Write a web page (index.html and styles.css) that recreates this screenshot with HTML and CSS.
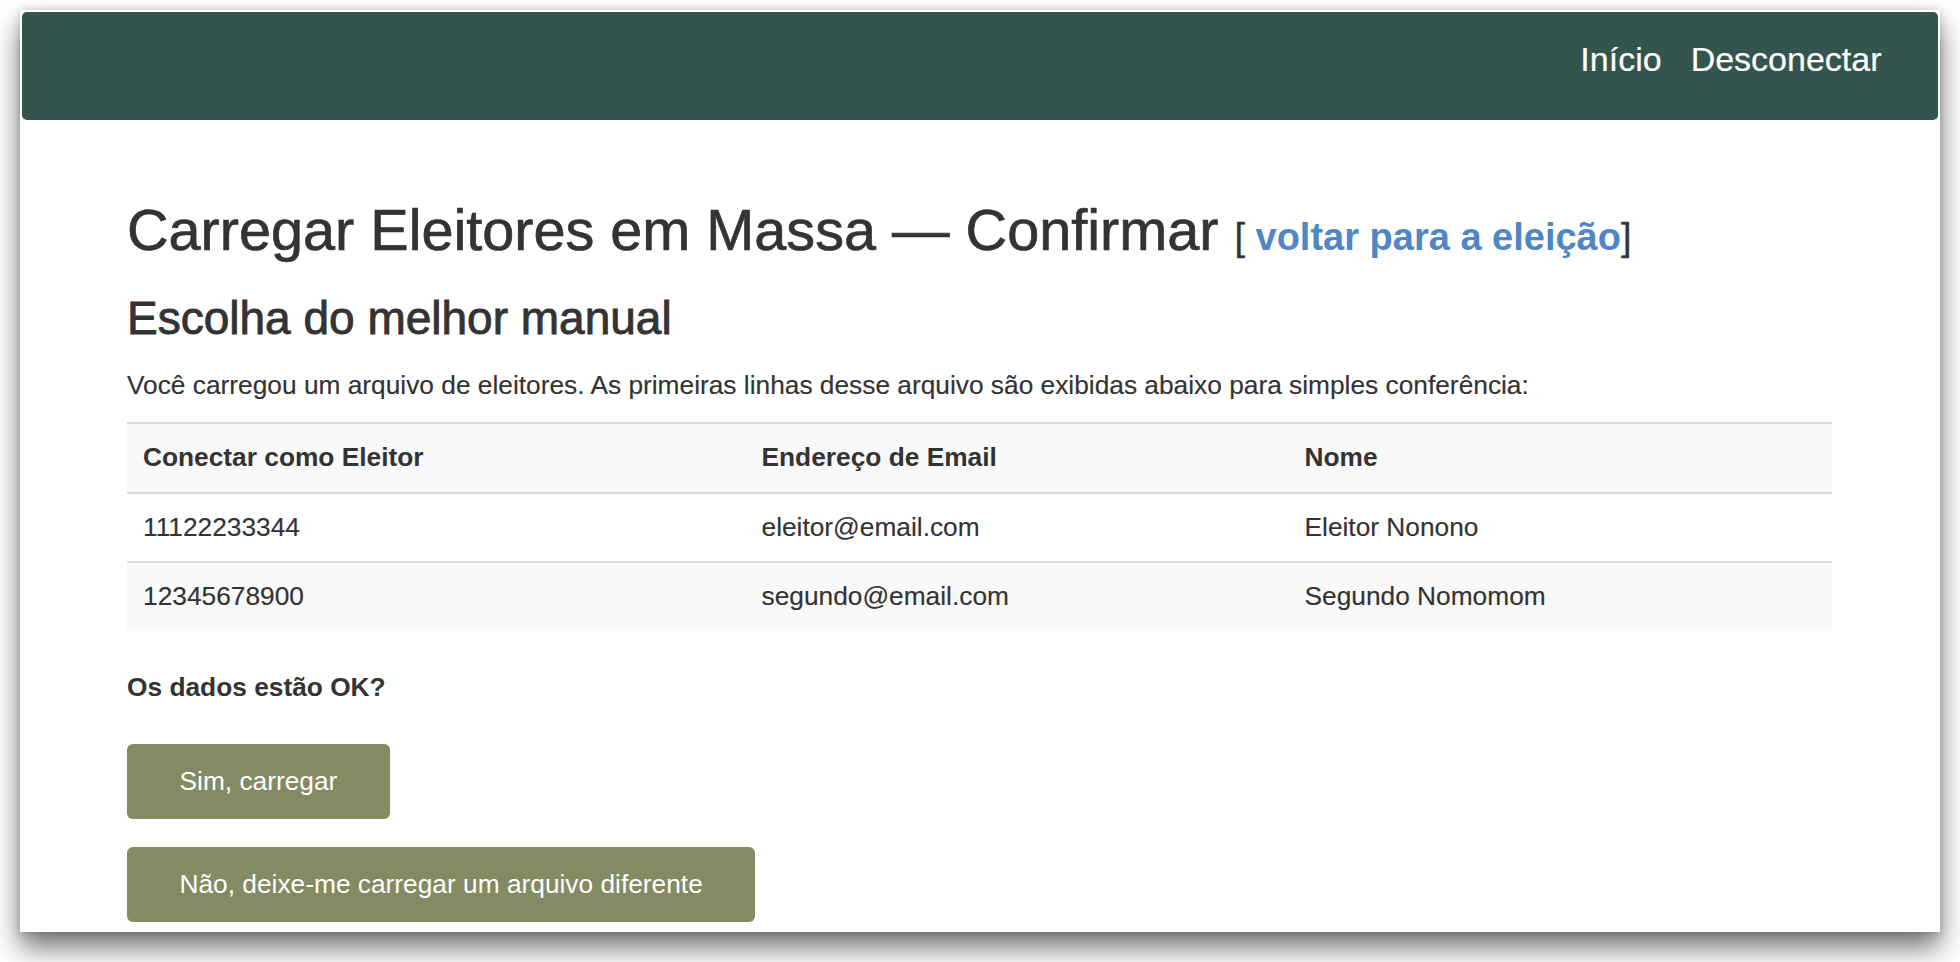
FILE: index.html
```html
<!DOCTYPE html>
<html lang="pt">
<head>
<meta charset="utf-8">
<title>Carregar Eleitores em Massa — Confirmar</title>
<link rel="stylesheet" href="styles.css">
</head>
<body>
<div class="window">
  <nav class="navbar">
    <a class="nav-link" href="#">Início</a>
    <a class="nav-link" href="#">Desconectar</a>
  </nav>
  <main class="content">
    <h1 class="title">Carregar Eleitores em Massa — Confirmar <span class="back">[ <a href="#">voltar para a eleição</a>]</span></h1>
    <h2 class="subtitle">Escolha do melhor manual</h2>
    <p class="intro">Você carregou um arquivo de eleitores. As primeiras linhas desse arquivo são exibidas abaixo para simples conferência:</p>
    <table class="voters">
      <colgroup>
        <col class="c1"><col class="c2"><col class="c3">
      </colgroup>
      <tbody>
        <tr class="head striped"><th>Conectar como Eleitor</th><th>Endereço de Email</th><th>Nome</th></tr>
        <tr><td>11122233344</td><td>eleitor@email.com</td><td>Eleitor Nonono</td></tr>
        <tr class="striped"><td>12345678900</td><td>segundo@email.com</td><td>Segundo Nomomom</td></tr>
      </tbody>
    </table>
    <p class="question">Os dados estão OK?</p>
    <div class="actions">
      <button class="btn" type="button">Sim, carregar</button>
      <button class="btn" type="button">Não, deixe-me carregar um arquivo diferente</button>
    </div>
  </main>
</div>
</body>
</html>
```
FILE: styles.css
```css
html, body {
  margin: 0;
  padding: 0;
  background: #ffffff;
  overflow: hidden;
}

body {
  font-family: "Liberation Sans", Arial, Helvetica, sans-serif;
  color: #333333;
  height: 962px;
}

.window {
  margin: 10px 20px 0 20px;
  width: 1920px;
  height: 922px;
  background: #ffffff;
  overflow: hidden;
  padding: 2px;
  box-sizing: border-box;
  box-shadow: 0 16px 26px rgba(0, 0, 0, 0.55), 0 0 8px rgba(0, 0, 0, 0.18);
}

.navbar {
  height: 108px;
  background: #34554e;
  border-radius: 5px;
  display: flex;
  justify-content: flex-end;
  align-items: flex-start;
  padding: 24px 42px 0 0;
  box-sizing: border-box;
}

.nav-link {
  color: #ffffff;
  text-decoration: none;
  font-size: 34px;
  line-height: 47.1px;
  padding: 0 14.5px;
  -webkit-text-stroke: 0.2px #ffffff;
}

.content {
  padding: 0 106px 0 105px;
}

.title {
  font-size: 57.6px;
  line-height: 1.1;
  font-weight: normal;
  margin: 79.4px 0 0 0;
  white-space: nowrap;
  -webkit-text-stroke: 0.7px #333333;
}

.back {
  font-size: 38px;
  color: #333333;
  -webkit-text-stroke: 0.3px #333333;
}

.back a {
  color: #4f86c5;
  font-weight: bold;
  text-decoration: none;
  -webkit-text-stroke: 0;
}

.subtitle {
  font-size: 46px;
  line-height: 1.1;
  font-weight: normal;
  margin: 30px 0 0 0;
  -webkit-text-stroke: 0.9px #333333;
}

.intro {
  font-size: 26.3px;
  line-height: 37.6px;
  margin: 23.7px 0 0 0;
  -webkit-text-stroke: 0.15px #333333;
}

.voters {
  width: 100%;
  border-collapse: collapse;
  table-layout: fixed;
  margin-top: 17.3px;
  font-size: 26.3px;
  line-height: 37.6px;
}

.voters .c1 { width: 618.5px; }
.voters .c2 { width: 543px; }
.voters .c3 { width: auto; }

.voters th,
.voters td {
  text-align: left;
  padding: 15px 16px;
  border-top: 2px solid #dddddd;
  vertical-align: middle;
  white-space: nowrap;
}

.voters td {
  -webkit-text-stroke: 0.15px #333333;
}

.voters th {
  font-weight: bold;
}

.voters .striped {
  background: #f9f9f9;
}

.question {
  font-size: 26.3px;
  line-height: 37.6px;
  font-weight: bold;
  margin: 38.3px 0 0 0;
}

.actions {
  display: flex;
  flex-direction: column;
  align-items: flex-start;
  gap: 28px;
  margin-top: 37.3px;
}

.btn {
  font-family: inherit;
  font-size: 26.3px;
  line-height: 37.6px;
  color: #ffffff;
  background: #848a62;
  border: none;
  border-radius: 6px;
  padding: 18.7px 52.5px;
  cursor: pointer;
}
```
